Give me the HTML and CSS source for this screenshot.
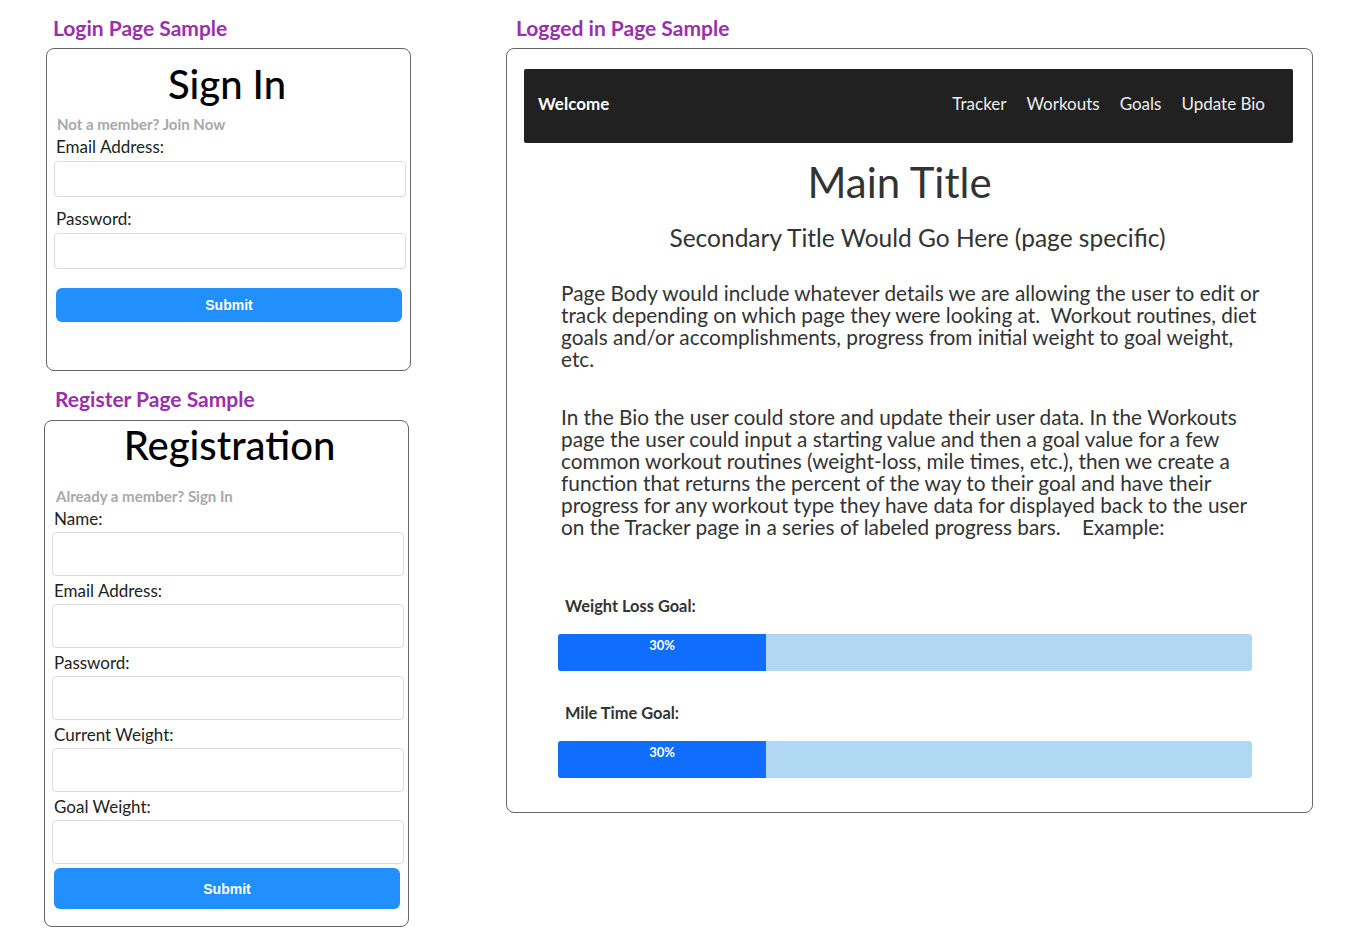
FILE: index.html
```html
<!DOCTYPE html>
<html lang="en">
<head>
<meta charset="utf-8">
<title>Samples</title>
<link rel="stylesheet" href="styles.css">
</head>
<body>
<div class="page">
  <div class="left-col">
    <h2 class="sample-label login-label">Login Page Sample</h2>
    <div class="card login-card">
      <h1 class="form-title login-title">Sign In</h1>
      <div class="hint login-hint">Not a member? Join Now</div>
      <label class="field-label">Email Address:</label>
      <div class="input input-sm"></div>
      <label class="field-label">Password:</label>
      <div class="input input-sm"></div>
      <button class="submit submit-login">Submit</button>
    </div>

    <h2 class="sample-label register-label">Register Page Sample</h2>
    <div class="card register-card">
      <h1 class="form-title reg-title">Registration</h1>
      <div class="hint reg-hint">Already a member? Sign In</div>
      <label class="field-label">Name:</label>
      <div class="input input-lg"></div>
      <label class="field-label">Email Address:</label>
      <div class="input input-lg"></div>
      <label class="field-label">Password:</label>
      <div class="input input-lg"></div>
      <label class="field-label">Current Weight:</label>
      <div class="input input-lg"></div>
      <label class="field-label">Goal Weight:</label>
      <div class="input input-lg"></div>
      <button class="submit submit-reg">Submit</button>
    </div>
  </div>

  <div class="right-col">
    <h2 class="sample-label main-label">Logged in Page Sample</h2>
    <div class="card main-card">
      <nav class="navbar">
        <span class="brand">Welcome</span>
        <ul class="nav-links">
          <li>Tracker</li>
          <li>Workouts</li>
          <li>Goals</li>
          <li>Update Bio</li>
        </ul>
      </nav>
      <h1 class="main-title">Main Title</h1>
      <h3 class="sub-title">Secondary Title Would Go Here (page specific)</h3>
      <p class="body-text">Page Body would include whatever details we are allowing the user to edit or track depending on which page they were looking at.&nbsp; Workout routines, diet goals and/or accomplishments, progress from initial weight to goal weight, etc.</p>
      <p class="body-text second">In the Bio the user could store and update their user data. In the Workouts page the user could input a starting value and then a goal value for a few common workout routines (weight-loss, mile times, etc.), then we create a function that returns the percent of the way to their goal and have their progress for any workout type they have data for displayed back to the user on the Tracker page in a series of labeled progress bars. &nbsp;&nbsp; Example:</p>
      <div class="goal first-goal">
        <div class="goal-label">Weight Loss Goal:</div>
        <div class="progress"><div class="progress-fill" style="width:30%">30%</div></div>
      </div>
      <div class="goal">
        <div class="goal-label">Mile Time Goal:</div>
        <div class="progress"><div class="progress-fill" style="width:30%">30%</div></div>
      </div>
    </div>
  </div>
</div>
</body>
</html>
```
FILE: styles.css
```css
* { box-sizing: border-box; }
body {
  margin: 0;
  background: #fff;
  font-family: Lato, "Open Sans", sans-serif;
  color: #222;
}
.page {
  display: flex;
  align-items: flex-start;
  padding-left: 44px;
}
.left-col {
  width: 367px;
  display: flex;
  flex-direction: column;
}
.right-col {
  margin-left: 95px;
  width: 807px;
  display: flex;
  flex-direction: column;
}
.sample-label {
  margin: 0;
  font-size: 21px;
  font-weight: 700;
  color: #9a2fae;
  line-height: 24px;
}
.login-label { padding: 16px 0 8px 9px; }
.register-label { padding: 16px 0 9px 11px; }
.main-label { padding: 16px 0 8px 10px; }

.card {
  border: 1px solid #666;
  border-radius: 8px;
  background: #fff;
}
.card > * { flex-shrink: 0; }
.login-card {
  margin-left: 2px;
  width: 365px;
  height: 323px;
  padding: 10px 4px 0 7px;
  display: flex;
  flex-direction: column;
}
.register-card {
  width: 365px;
  height: 507px;
  padding: 0 4px 0 7px;
  display: flex;
  flex-direction: column;
}
.form-title {
  margin: 0;
  text-align: center;
  font-size: 40px;
  font-weight: 500;
  color: #000;
  line-height: 50px;
}
.login-title { margin-right: 6px; }
.reg-title { line-height: 48px; margin-left: 3px; }
.hint {
  padding-left: 4px;
  font-size: 15px;
  font-weight: 700;
  color: #a8a8a8;
  line-height: 18px;
}
.login-hint { margin: 6px 0 3px 0; padding-left: 3px; }
.reg-hint { margin: 18px 0 3px 0; padding-left: 4px; }
.field-label {
  display: block;
  padding-left: 2px;
  font-size: 17px;
  color: #222;
  line-height: 22px;
}
.input {
  border: 1px solid #dcdcdc;
  border-radius: 4px;
  background: #fff;
}
.input-sm { height: 36px; margin: 3px 0 11px 0; }
.input-lg { height: 44px; margin: 2px 0 4px 0; }
.submit {
  border: none;
  border-radius: 6px;
  background: #2190fc;
  color: #fff;
  font-family: "Liberation Sans", Arial, sans-serif;
  font-weight: 700;
  font-size: 14px;
  cursor: pointer;
}
.submit-login {
  margin: 8px 4px 0 2px;
  height: 34px;
}
.submit-reg {
  margin: 0 4px 0 2px;
  height: 41px;
}

.main-card {
  height: 765px;
  padding: 20px 19px 0 17px;
  display: flex;
  flex-direction: column;
}
.navbar {
  background: #212121;
  border-radius: 2px;
  height: 74px;
  display: flex;
  align-items: center;
  justify-content: space-between;
  padding: 0 28px 5px 14px;
  color: #fff;
}
.brand {
  font-size: 17px;
  font-weight: 700;
}
.nav-links {
  list-style: none;
  margin: 0;
  padding: 0;
  display: flex;
  gap: 20px;
  font-size: 17px;
  color: #eee;
}
.main-title {
  margin: 13px 18px 0 0;
  text-align: center;
  font-size: 42px;
  font-weight: 400;
  color: #333;
  line-height: 52px;
}
.sub-title {
  margin: 15px 0 0 18px;
  text-align: center;
  font-size: 24.5px;
  font-weight: 400;
  color: #333;
  line-height: 30px;
}
.body-text {
  margin: 29px 0 0 37px;
  width: 705px;
  font-size: 20.8px;
  line-height: 22px;
  color: #333;
}
.body-text.second { margin-top: 36px; }
.goal { margin-left: 34px; width: 694px; }
.first-goal { margin-top: 58px; }
.goal-label {
  margin: 0 0 0 7px;
  font-size: 16.4px;
  font-weight: 700;
  color: #333;
  line-height: 20px;
}
.progress {
  margin-top: 18px;
  height: 37px;
  background: #b1d8f2;
  border-radius: 3px;
  overflow: hidden;
  margin-bottom: 32px;
}
.progress-fill {
  height: 100%;
  background: #0f6efd;
  color: #fff;
  font-size: 13px;
  font-weight: 700;
  text-align: center;
  line-height: 22px;
}
```
